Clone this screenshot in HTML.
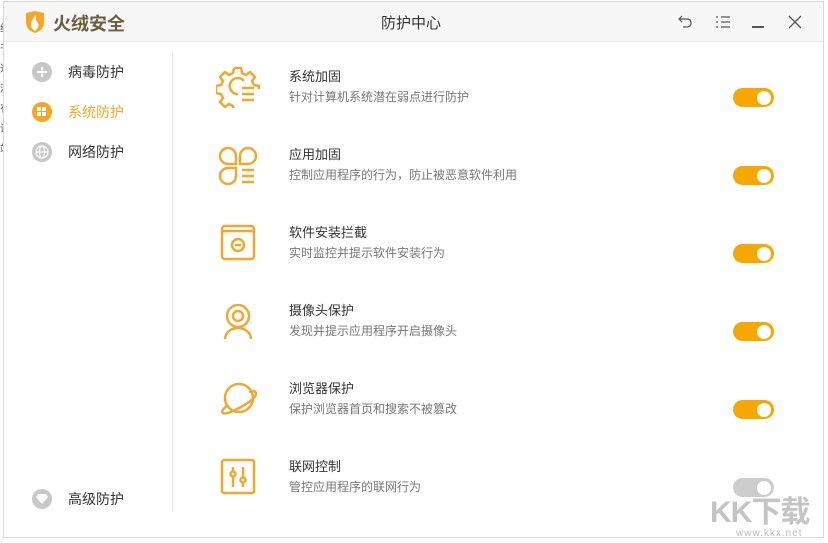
<!DOCTYPE html><html><head><meta charset="utf-8"><style>
*{margin:0;padding:0;box-sizing:border-box}
body{width:828px;height:543px;background:#fff;font-family:"Liberation Sans","Noto Sans CJK SC",sans-serif;position:relative;overflow:hidden}
.win{position:absolute;left:3px;top:1px;width:821px;height:537px;border:1px solid #d8d8d8;background:#fff}
.tb{position:absolute;left:0;top:0;right:0;height:40px;background:#f7f7f7;border-bottom:1px solid #ececec}
.abs{position:absolute}
.side{position:absolute;left:168px;top:50px;width:1px;height:460px;background:#e8e8e8}
.si{position:absolute;left:28px;font-size:14px;color:#333;display:flex;align-items:center}
.si .c{width:20px;height:20px;border-radius:50%;background:#c8c8c8;margin-right:16px;position:relative}
.t{position:absolute;left:285px;font-size:13px;color:#333}
.d{position:absolute;left:285px;font-size:12px;color:#777}
.tg{position:absolute;left:729px;width:41px;height:19px;border-radius:10px;background:#f7a800}
.tg:after{content:"";position:absolute;right:3px;top:2.5px;width:14px;height:14px;border-radius:50%;background:#fff}
.ic{position:absolute;left:212px}
</style></head><body>
<div class="abs" style="left:0;top:20px;width:3px;font-size:10px;color:#555;line-height:20px;overflow:hidden">给<br>于<br>通<br>浪<br>有<br>讲<br>站</div>
<div class="win">
<div class="tb">
<svg class="abs" style="left:20px;top:8px" width="22" height="24" viewBox="0 0 22 24"><path d="M2 3 L11 1 L20 3 L20 12 Q20 20 11 23 Q2 20 2 12Z" fill="#f5a623"/><path d="M11 21 Q6 18 7 13 Q8 9 12 5 Q11 10 14 13 Q16 17 11 21Z" fill="#fff"/></svg>
<div class="abs" style="left:49px;top:8px;font-size:18px;font-weight:bold;color:#6e5c3e">火绒安全</div>
<div class="abs" style="left:377px;top:10px;font-size:15px;color:#333">防护中心</div>
<svg class="abs" style="left:673px;top:12px" width="16" height="16" viewBox="0 0 16 16" fill="none" stroke="#555" stroke-width="1.2"><path d="M5 2 L2 5 L5 8 M2 5 H10 Q14 5 14 9 Q14 13 10 13 H6"/></svg>
<svg class="abs" style="left:711px;top:13px" width="16" height="14" viewBox="0 0 16 14" fill="none" stroke="#555" stroke-width="1.2"><path d="M1 2h2M6 2h9M1 7h2M6 7h9M1 12h2M6 12h9"/></svg>
<div class="abs" style="left:748px;top:24px;width:12px;height:1.5px;background:#555"></div>
<svg class="abs" style="left:784px;top:13px" width="14" height="14" viewBox="0 0 14 14" stroke="#555" stroke-width="1.3"><path d="M1 1L13 13M13 1L1 13"/></svg>
</div>
<div class="side"></div>
<div class="si" style="top:60px"><div class="c"><span class="abs" style="left:5px;top:9px;width:10px;height:2px;background:#fff"></span><span class="abs" style="left:9px;top:5px;width:2px;height:10px;background:#fff"></span></div>病毒防护</div>
<div class="si" style="top:100px;color:#f5a623"><div class="c" style="background:#f5a623"><span class="abs" style="left:5px;top:5px;width:4px;height:4px;background:#fff"></span><span class="abs" style="left:10px;top:5px;width:4px;height:4px;background:#fff"></span><span class="abs" style="left:5px;top:10px;width:4px;height:4px;background:#fff"></span><span class="abs" style="left:10px;top:10px;width:4px;height:4px;background:#fff"></span></div>系统防护</div>
<div class="si" style="top:140px"><div class="c"><svg class="abs" style="left:3px;top:3px" width="14" height="14" viewBox="0 0 14 14" fill="none" stroke="#fff" stroke-width="1.2"><circle cx="7" cy="7" r="6"/><ellipse cx="7" cy="7" rx="2.5" ry="6"/><path d="M1 7h12"/></svg></div>网络防护</div>
<div class="si" style="top:487px"><div class="c"><svg class="abs" style="left:4px;top:5px" width="12" height="10" viewBox="0 0 12 10" fill="#fff"><path d="M2 0h8l2 3-6 7-6-7z"/></svg></div>高级防护</div>

<svg class="ic" style="top:62px" width="44" height="44" viewBox="0 0 44 44" fill="none" stroke="#f0a830" stroke-width="2.5"><path d="M18 4h7l1 5 4 2 4-3 5 5-3 4 2 4 5 1v3M18 4l-1 5-4 2-4-3-5 5 3 4-2 4-5 1v7l5 1 2 4-3 4 5 5 4-3 4 2 1 5h4"/><path d="M22 30a8 8 0 1 1 6-13"/><path d="M26 24h12M26 30h12M26 36h12"/></svg>
<div class="t" style="top:64px">系统加固</div><div class="d" style="top:86px">针对计算机系统潜在弱点进行防护</div><div class="tg" style="top:86px"></div>

<svg class="ic" style="top:142px" width="44" height="44" viewBox="0 0 44 44" fill="none" stroke="#f0a830" stroke-width="2.5"><path d="M20 20H12a8 8 0 1 1 8-8z"/><path d="M24 20h8a8 8 0 1 0-8-8z"/><path d="M20 24H12a8 8 0 1 0 8 8z"/><path d="M26 26h12M26 32h12M26 38h12"/></svg>
<div class="t" style="top:142px">应用加固</div><div class="d" style="top:164px">控制应用程序的行为，防止被恶意软件利用</div><div class="tg" style="top:164px"></div>

<svg class="ic" style="top:219px" width="44" height="44" viewBox="0 0 44 44" fill="none" stroke="#f0a830" stroke-width="2.5"><rect x="6" y="5" width="32" height="33" rx="3"/><path d="M6 10h32"/><circle cx="22" cy="24" r="6"/><path d="M19 24h6"/></svg>
<div class="t" style="top:220px">软件安装拦截</div><div class="d" style="top:242px">实时监控并提示软件安装行为</div><div class="tg" style="top:242px"></div>

<svg class="ic" style="top:297px" width="44" height="44" viewBox="0 0 44 44" fill="none" stroke="#f0a830" stroke-width="2.5"><circle cx="22" cy="17" r="11"/><circle cx="22" cy="17" r="5"/><path d="M9 40a13 11 0 0 1 26 0"/></svg>
<div class="t" style="top:298px">摄像头保护</div><div class="d" style="top:320px">发现并提示应用程序开启摄像头</div><div class="tg" style="top:320px"></div>

<svg class="ic" style="top:375px" width="44" height="44" viewBox="0 0 44 44" fill="none" stroke="#f0a830" stroke-width="2.5"><circle cx="23" cy="21" r="14"/><path d="M12 28q-8 6-5 8 3 2 18-6 16-9 15-14-1-3-7-1"/></svg>
<div class="t" style="top:376px">浏览器保护</div><div class="d" style="top:398px">保护浏览器首页和搜索不被篡改</div><div class="tg" style="top:398px"></div>

<svg class="ic" style="top:453px" width="44" height="44" viewBox="0 0 44 44" fill="none" stroke="#f0a830" stroke-width="2.5"><rect x="6" y="5" width="32" height="33" rx="2"/><path d="M17 12v20M27 12v20"/><circle cx="17" cy="19" r="2.5" fill="#fff"/><circle cx="27" cy="25" r="2.5" fill="#fff"/></svg>
<div class="t" style="top:454px">联网控制</div><div class="d" style="top:476px">管控应用程序的联网行为</div>
<div class="tg" style="top:476px;background:#ccc"></div>
</div>
<div class="abs" style="left:710px;top:487px;font-size:30px;font-weight:bold;color:#c4c4c4;letter-spacing:-1px">KK下载</div>
<div class="abs" style="left:736px;top:528px;font-size:10px;color:#bbb;letter-spacing:1px">www.kkx.net</div>
</body></html>
